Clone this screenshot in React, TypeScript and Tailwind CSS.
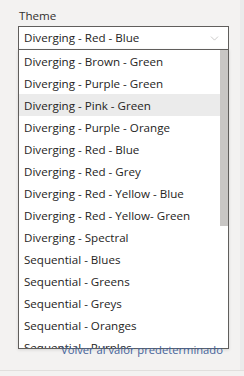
import { ChevronDown } from 'lucide-react';

const themes = [
  'Diverging - Brown - Green',
  'Diverging - Purple - Green',
  'Diverging - Pink - Green',
  'Diverging - Purple - Orange',
  'Diverging - Red - Blue',
  'Diverging - Red - Grey',
  'Diverging - Red - Yellow - Blue',
  'Diverging - Red - Yellow- Green',
  'Diverging - Spectral',
  'Sequential - Blues',
  'Sequential - Greens',
  'Sequential - Greys',
  'Sequential - Oranges',
  'Sequential - Purples',
];

export default function App() {
  return (
    <div
      className="flex h-[376px] w-[244px] flex-col overflow-hidden bg-[#f3f2f1] text-[11.6px] text-[#252423]"
      style={{ fontFamily: '"Segoe UI", "Open Sans", sans-serif' }}
    >
      <div className="relative flex h-[370px] flex-col border-r-[4px] border-[#ebebeb] pl-[18px] pr-[11px]">
        <p className="mt-[7px] h-[17px] pl-[1px] leading-[17px] text-[#323130]">Theme</p>
        <div className="mt-[2px] flex h-[24px] items-center justify-between border border-[#605e5c] bg-white pl-[5px] pr-[7px]">
          <span className="leading-[20px]">Diverging - Red - Blue</span>
          <ChevronDown className="h-[13px] w-[13px] text-[#a19f9d]" strokeWidth={1} />
        </div>

        <div className="relative z-10 mt-[292px] whitespace-nowrap pl-[43px] text-[11.2px] leading-[16px] text-[#44639a]">
          Volver al valor predeterminado
        </div>

        <div className="absolute left-[18px] top-[49px] z-0 flex h-[300px] w-[211px] overflow-hidden border border-[#605e5c] bg-white shadow-[0_1px_3px_rgba(0,0,0,0.12)]">
          <ul className="flex-1">
            {themes.map((t) => (
              <li
                key={t}
                className={
                  'flex h-[22px] items-center pl-[5px] pt-[1px] ' +
                  (t === 'Diverging - Pink - Green' ? 'bg-[#ebebeb]' : '')
                }
              >
                {t}
              </li>
            ))}
          </ul>
          <div className="w-[8px] bg-white">
            <div className="h-[176px] bg-[#c8c6c4]" />
          </div>
        </div>
      </div>
      <div className="flex-1 border-t border-[#e1dfdd] bg-[#f3f2f1]" />
    </div>
  );
}
